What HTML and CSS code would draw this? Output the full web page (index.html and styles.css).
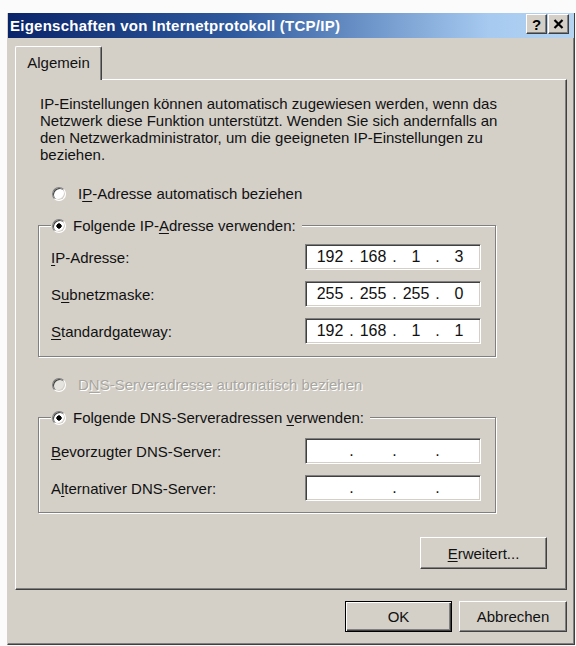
FILE: index.html
```html
<!DOCTYPE html>
<html lang="de">
<head>
<meta charset="utf-8">
<title>Eigenschaften von Internetprotokoll (TCP/IP)</title>
<link rel="stylesheet" href="styles.css">
</head>
<body>
<div class="window">
  <div class="titlebar">
    <span class="title">Eigenschaften von Internetprotokoll (TCP/IP)</span>
    <div class="tbtns">
      <span class="tbtn help">?</span>
      <span class="tbtn close"><svg width="11" height="10" viewBox="0 0 11 10"><path d="M1.5 1 L9.5 9 M9.5 1 L1.5 9" stroke="#000" stroke-width="2.2" fill="none"/></svg></span>
    </div>
  </div>
  <div class="content">
    <div class="tabs"><div class="tab">Algemein</div></div>
    <div class="panel">
      <p class="desc">IP-Einstellungen können automatisch zugewiesen werden, wenn das<br>Netzwerk diese Funktion unterstützt. Wenden Sie sich andernfalls an<br>den Netzwerkadministrator, um die geeigneten IP-Einstellungen zu<br>beziehen.</p>

      <div class="opt opt-auto-ip"><span class="radio"></span><span>I<u>P</u>-Adresse automatisch beziehen</span></div>

      <fieldset class="group group-ip">
        <legend><span class="radio checked"></span><span>Folgende IP-<u>A</u>dresse verwenden:</span></legend>
        <div class="row">
          <span class="lbl"><u>I</u>P-Adresse:</span>
          <div class="ip"><span class="seg">192</span><span class="dot">.</span><span class="seg">168</span><span class="dot">.</span><span class="seg">1</span><span class="dot">.</span><span class="seg">3</span></div>
        </div>
        <div class="row">
          <span class="lbl">S<u>u</u>bnetzmaske:</span>
          <div class="ip"><span class="seg">255</span><span class="dot">.</span><span class="seg">255</span><span class="dot">.</span><span class="seg">255</span><span class="dot">.</span><span class="seg">0</span></div>
        </div>
        <div class="row">
          <span class="lbl"><u>S</u>tandardgateway:</span>
          <div class="ip"><span class="seg">192</span><span class="dot">.</span><span class="seg">168</span><span class="dot">.</span><span class="seg">1</span><span class="dot">.</span><span class="seg">1</span></div>
        </div>
      </fieldset>

      <div class="opt opt-auto-dns disabled"><span class="radio"></span><span>D<u>N</u>S-Serveradresse automatisch beziehen</span></div>

      <fieldset class="group group-dns">
        <legend><span class="radio checked"></span><span>Folgende DNS-Serveradressen <u>v</u>erwenden:</span></legend>
        <div class="row">
          <span class="lbl"><u>B</u>evorzugter DNS-Server:</span>
          <div class="ip"><span class="seg"></span><span class="dot">.</span><span class="seg"></span><span class="dot">.</span><span class="seg"></span><span class="dot">.</span><span class="seg"></span></div>
        </div>
        <div class="row">
          <span class="lbl">A<u>l</u>ternativer DNS-Server:</span>
          <div class="ip"><span class="seg"></span><span class="dot">.</span><span class="seg"></span><span class="dot">.</span><span class="seg"></span><span class="dot">.</span><span class="seg"></span></div>
        </div>
      </fieldset>

      <div class="adv"><button class="btn btn-adv"><u>E</u>rweitert...</button></div>
    </div>
    <div class="footer">
      <button class="btn btn-ok">OK</button>
      <button class="btn btn-cancel">Abbrechen</button>
    </div>
  </div>
</div>
</body>
</html>
```

FILE: styles.css
```css
* { box-sizing: border-box; }
html, body { margin: 0; padding: 0; }
body {
  width: 576px;
  height: 646px;
  overflow: hidden;
  background: #fbfbfb;
  font-family: "Liberation Sans", Arial, sans-serif;
  font-size: 15px;
  color: #111;
}
u { text-decoration: underline; text-underline-offset: 2px; }

.window {
  margin: 13px 0 0 7px;
  width: 568px;
  height: 632px;
  background: #d4d0c8;
  border: 1px solid;
  border-top: 0;
  border-color: #d4d0c8 #404040 #404040 #d4d0c8;
  box-shadow: inset -1px -1px #808080;
  display: flex;
  flex-direction: column;
}

.titlebar {
  height: 25px;
  display: flex;
  align-items: center;
  justify-content: space-between;
  background: linear-gradient(90deg, #0a246a 0%, #2f5a9e 40%, #a6caf0 85%, #b4d4f2 100%);
  padding: 0 5px 0 2px;
  flex: none;
}
.title {
  color: #fff;
  font-weight: bold;
  font-size: 15px;
  letter-spacing: 0.25px;
  white-space: nowrap;
}
.tbtns { display: flex; gap: 1px; align-self: flex-start; margin-top: 1px; }
.tbtn {
  width: 21px;
  height: 20px;
  background: #d4d0c8;
  border: 1px solid;
  border-color: #fff #404040 #404040 #fff;
  box-shadow: inset -1px -1px #808080;
  display: flex;
  align-items: center;
  justify-content: center;
  font-weight: bold;
  font-size: 15px;
  line-height: 1;
  color: #000;
}

.content {
  flex: 1;
  display: flex;
  flex-direction: column;
  padding: 8px 6px 0 7px;
}

.tabs { display: flex; position: relative; z-index: 1; margin-bottom: -1px; }
.tab {
  width: 87px;
  height: 34px;
  background: #d4d0c8;
  border-top: 1px solid #fff;
  border-left: 1px solid #fff;
  border-right: 1px solid #404040;
  box-shadow: inset -1px 0 #808080;
  border-radius: 2px 2px 0 0;
  display: flex;
  align-items: center;
  justify-content: center;
  padding-bottom: 2px;
}

.panel {
  width: 552px;
  height: 511px;
  border: 1px solid;
  border-color: #fff #404040 #404040 #fff;
  box-shadow: inset -1px -1px #808080;
  display: flex;
  flex-direction: column;
  align-items: flex-start;
}

.desc {
  margin: 15px 0 0 24px;
  line-height: 17px;
  white-space: nowrap;
}

.opt {
  display: flex;
  align-items: center;
  gap: 12px;
  height: 17px;
  margin-left: 36px;
}
.opt-auto-ip { margin-top: 22px; }
.opt-auto-dns { margin-top: 19px; }
.disabled { color: #a8a69f; text-shadow: 1px 1px 0 #fff; }

.radio {
  width: 14px;
  height: 14px;
  flex: none;
  border-radius: 50%;
  border: 1px solid;
  border-color: #808080 #fff #fff #808080;
  box-shadow: inset 1px 1px #404040, inset -1px -1px #d4d0c8;
  background: #fff;
}
.radio.checked { background: radial-gradient(circle, #000 0 2.4px, #fff 2.9px); }
.disabled .radio { background: #e6e4de; }

.group {
  margin: 15px 0 0 22px;
  width: 458px;
  border: 1px solid #808080;
  box-shadow: inset 1px 1px #fff, 1px 1px #fff;
  padding: 10px 12px 12px 12px;
  min-width: 0;
}
.group-dns { margin-top: 16px; padding-top: 12px; padding-bottom: 11px; }
.group legend {
  padding: 0 6px 0 1px;
  display: flex;
  align-items: center;
  gap: 7px;
  height: 17px;
  background: #d4d0c8;
}

.row {
  display: flex;
  align-items: center;
  height: 26px;
}
.row + .row { margin-top: 11px; }
.lbl { width: 254px; }

.ip {
  width: 176px;
  height: 26px;
  background: #fff;
  border: 1px solid;
  border-color: #808080 #fff #fff #808080;
  box-shadow: inset 1px 1px #404040, inset -1px -1px #d4d0c8;
  display: flex;
  align-items: center;
  padding-left: 6px;
  font-size: 16px;
}
.seg { width: 36px; text-align: center; }
.dot { width: 7px; text-align: center; }

.adv {
  align-self: stretch;
  display: flex;
  justify-content: flex-end;
  margin: 24px 19px 0 0;
}

.btn {
  font-family: "Liberation Sans", Arial, sans-serif;
  font-size: 15px;
  color: #111;
  background: #d4d0c8;
  border: 1px solid;
  border-color: #fff #404040 #404040 #fff;
  box-shadow: inset -1px -1px #808080;
  height: 32px;
  padding: 0;
}
.btn-adv { width: 127px; }

.footer {
  display: flex;
  justify-content: flex-end;
  gap: 7px;
  margin-top: 11px;
  padding-right: 1px;
}
.btn-ok {
  width: 107px;
  height: 31px;
  border: 1px solid #000;
  box-shadow: inset 1px 1px #fff, inset -1px -1px #404040, inset -2px -2px #808080;
}
.btn-cancel { width: 108px; height: 31px; }
```
